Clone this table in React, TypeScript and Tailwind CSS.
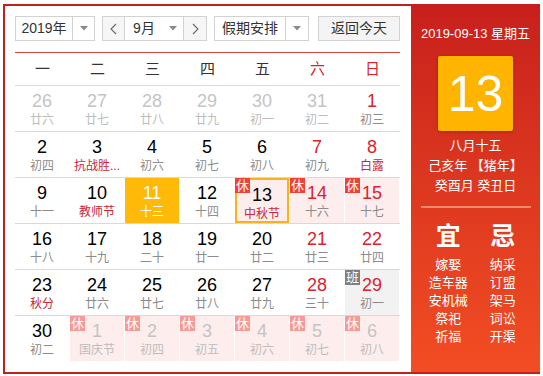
import React from "react";

type Day = {
  d: number;
  l: string;
  other?: boolean;
  red?: boolean;
  fest?: boolean;
  rest?: boolean;
  work?: boolean;
  sel?: boolean;
  today?: boolean;
};

const weeks: Day[][] = [
  [
    { d: 26, l: "廿六", other: true },
    { d: 27, l: "廿七", other: true },
    { d: 28, l: "廿八", other: true },
    { d: 29, l: "廿九", other: true },
    { d: 30, l: "初一", other: true },
    { d: 31, l: "初二", other: true },
    { d: 1, l: "初三", red: true },
  ],
  [
    { d: 2, l: "初四" },
    { d: 3, l: "抗战胜...", fest: true },
    { d: 4, l: "初六" },
    { d: 5, l: "初七" },
    { d: 6, l: "初八" },
    { d: 7, l: "初九", red: true },
    { d: 8, l: "白露", red: true, fest: true },
  ],
  [
    { d: 9, l: "十一" },
    { d: 10, l: "教师节", fest: true },
    { d: 11, l: "十三", sel: true },
    { d: 12, l: "十四" },
    { d: 13, l: "中秋节", fest: true, rest: true, today: true },
    { d: 14, l: "十六", red: true, rest: true },
    { d: 15, l: "十七", red: true, rest: true },
  ],
  [
    { d: 16, l: "十八" },
    { d: 17, l: "十九" },
    { d: 18, l: "二十" },
    { d: 19, l: "廿一" },
    { d: 20, l: "廿二" },
    { d: 21, l: "廿三", red: true },
    { d: 22, l: "廿四", red: true },
  ],
  [
    { d: 23, l: "秋分", fest: true },
    { d: 24, l: "廿六" },
    { d: 25, l: "廿七" },
    { d: 26, l: "廿八" },
    { d: 27, l: "廿九" },
    { d: 28, l: "三十", red: true },
    { d: 29, l: "初一", red: true, work: true },
  ],
  [
    { d: 30, l: "初二" },
    { d: 1, l: "国庆节", other: true, rest: true },
    { d: 2, l: "初四", other: true, rest: true },
    { d: 3, l: "初五", other: true, rest: true },
    { d: 4, l: "初六", other: true, rest: true },
    { d: 5, l: "初七", other: true, rest: true },
    { d: 6, l: "初八", other: true, rest: true },
  ],
];

const yi = ["嫁娶", "造车器", "安机械", "祭祀", "祈福"];
const ji = ["纳采", "订盟", "架马", "词讼", "开渠"];

function Caret() {
  return (
    <svg width="8" height="5" viewBox="0 0 8 5">
      <path d="M0 0 L8 0 L4 4.5 Z" fill="#8a8a8a" />
    </svg>
  );
}

function Chevron({ dir }: { dir: "l" | "r" }) {
  return (
    <svg width="7" height="12" viewBox="0 0 7 12">
      <path
        d={dir === "l" ? "M6 1 L1 6 L6 11" : "M1 1 L6 6 L1 11"}
        fill="none"
        stroke="#666"
        strokeWidth="1.1"
      />
    </svg>
  );
}

function Cell({ day }: { day: Day }) {
  let bg = "";
  if (day.sel) bg = "bg-[#ffb909]";
  else if (day.rest) bg = "bg-[#fdeded]";
  else if (day.work) bg = "bg-[#f2f2f2]";

  let numColor = "text-black";
  if (day.sel) numColor = "text-white";
  else if (day.other) numColor = "text-[#c4c4c4]";
  else if (day.red) numColor = "text-[#d8232f]";

  let lunarColor = "text-[#8c8c8c]";
  if (day.sel) lunarColor = "text-white";
  else if (day.other) lunarColor = "text-[#bdbdbd]";
  else if (day.fest) lunarColor = "text-[#c9263a]";

  return (
    <div
      className={`relative mr-[1px] h-[45px] flex flex-col items-center pt-[5px] ${bg} ${
        day.today ? "border-2 border-[#f6b41a] pt-[3px]" : ""
      }`}
    >
      {day.rest && (
        <div
          className={`absolute ${day.today ? "-left-[2px] -top-[2px]" : "left-0 top-0"} w-[15px] h-[15px] flex items-center justify-center text-[13px] leading-none text-white ${
            day.other ? "bg-[#f59a96]" : "bg-[#ee4236]"
          }`}
        >
          休
        </div>
      )}
      {day.work && (
        <div className="absolute left-0 top-0 w-[15px] h-[15px] flex items-center justify-center text-[13px] leading-none text-white bg-[#7f7f7f]">
          班
        </div>
      )}
      <div
        className={`text-[18px] leading-[20px] font-['Liberation_Sans',Arial,sans-serif] ${numColor}`}
      >
        {day.d}
      </div>
      <div className={`mt-[1px] text-[12px] leading-[16px] whitespace-nowrap ${lunarColor}`}>
        {day.l}
      </div>
    </div>
  );
}

export default function App() {
  return (
    <div className="pl-[3px] pt-[4px] bg-white font-['Liberation_Sans','Noto_Sans_CJK_SC',sans-serif]">
      <div className="flex w-[537px] h-[370px] border-2 border-r-0 border-[#c5211c]">
        {/* calendar */}
        <div className="w-[406px] pl-[10px] pr-[11px] pt-[10px]">
          <div className="flex items-center h-[25px] text-[14px] text-[#333]">
            <div className="flex w-[80px] h-[25px] border border-[#d2d2d2] bg-white">
              <div className="w-[56px] flex items-center justify-center">2019年</div>
              <div className="flex-1 flex items-center justify-center border-l border-[#d2d2d2]">
                <Caret />
              </div>
            </div>
            <div className="ml-[7px] flex w-[105px] h-[25px] border border-[#d2d2d2] bg-white">
              <div className="w-[22px] flex items-center justify-center bg-[#f6f6f6] border-r border-[#d2d2d2]">
                <Chevron dir="l" />
              </div>
              <div className="w-[38px] flex items-center justify-center">9月</div>
              <div className="flex-1 flex items-center justify-center">
                <Caret />
              </div>
              <div className="w-[23px] flex items-center justify-center bg-[#f6f6f6] border-l border-[#d2d2d2]">
                <Chevron dir="r" />
              </div>
            </div>
            <div className="ml-[7px] flex w-[95px] h-[25px] border border-[#d2d2d2] bg-white">
              <div className="w-[70px] flex items-center justify-center">假期安排</div>
              <div className="flex-1 flex items-center justify-center border-l border-[#d2d2d2]">
                <Caret />
              </div>
            </div>
            <div className="ml-[9px] w-[82px] h-[25px] flex items-center justify-center border border-[#d2d2d2] bg-[#f4f4f4]">
              返回今天
            </div>
          </div>

          <div className="mt-[11px] h-px bg-[#e0413c]" />

          <div className="grid grid-cols-7 h-[33px] items-center text-[15px] border-b border-[#d9d9d9]">
            {["一", "二", "三", "四", "五", "六", "日"].map((w, i) => (
              <div
                key={w}
                className={`text-center ${i >= 5 ? "text-[#d8232f]" : "text-[#333]"}`}
              >
                {w}
              </div>
            ))}
          </div>

          {weeks.map((week, wi) => (
            <div
              key={wi}
              className={`grid grid-cols-7 ${
                wi < weeks.length - 1 ? "border-b border-[#d9d9d9]" : ""
              }`}
            >
              {week.map((day, di) => (
                <Cell key={di} day={day} />
              ))}
            </div>
          ))}
        </div>

        {/* side panel */}
        <div className="flex-1 flex flex-col items-center bg-gradient-to-b from-[#c81f1c] to-[#f24d23] text-white">
          <div className="mt-[20px] text-[13px] leading-[16px]">2019-09-13 星期五</div>
          <div className="mt-[14px] w-[75px] h-[75px] rounded-[2px] bg-[#ffb400] shadow-[0_1px_3px_rgba(0,0,0,0.25)] flex items-center justify-center text-[50px] leading-none font-['Liberation_Sans',Arial,sans-serif]">
            13
          </div>
          <div className="mt-[5px] flex flex-col items-center text-[13px] leading-[20px]">
            <div>八月十五</div>
            <div>己亥年 【猪年】</div>
            <div>癸酉月 癸丑日</div>
          </div>
          <div className="mt-[10px] w-[110px] h-[2px] bg-[#f08a6f]" />
          <div className="mt-[14px] w-full px-[10px] grid grid-cols-2">
            <div className="flex flex-col items-center">
              <div className="text-[25px] leading-[28px] font-bold">宜</div>
              <div className="mt-[6px] flex flex-col items-center text-[13px] leading-[18px]">
                {yi.map((t) => (
                  <div key={t}>{t}</div>
                ))}
              </div>
            </div>
            <div className="flex flex-col items-center">
              <div className="text-[25px] leading-[28px] font-bold">忌</div>
              <div className="mt-[6px] flex flex-col items-center text-[13px] leading-[18px]">
                {ji.map((t) => (
                  <div key={t}>{t}</div>
                ))}
              </div>
            </div>
          </div>
        </div>
      </div>
    </div>
  );
}
